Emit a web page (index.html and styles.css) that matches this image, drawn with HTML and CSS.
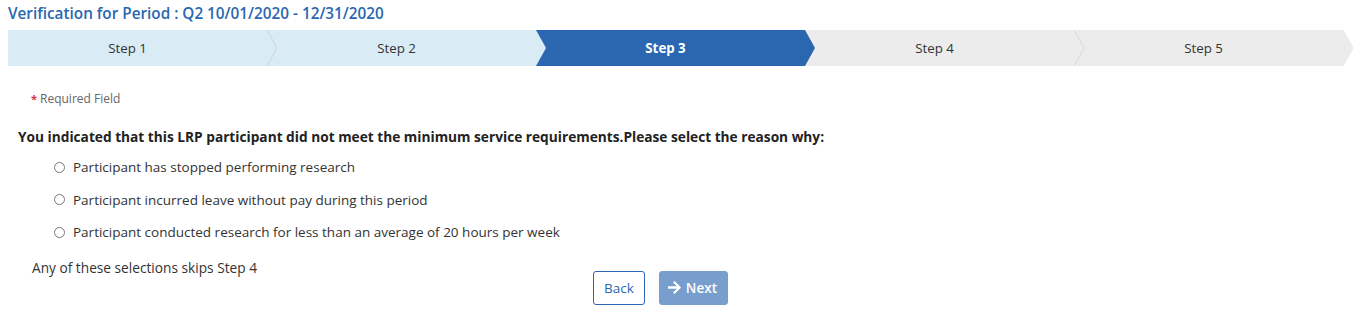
FILE: index.html
```html
<!DOCTYPE html>
<html>
<head>
<meta charset="utf-8">
<link rel="stylesheet" href="styles.css">
</head>
<body>
<div class="page">
  <h1 class="title">Verification for Period : Q2 10/01/2020 - 12/31/2020</h1>
  <div class="stepper">
    <div class="step done first">Step 1</div>
    <svg class="sep" viewBox="0 0 10 36" preserveAspectRatio="none"><rect width="10" height="36" fill="#d9ecf5"/><polygon points="0,0 10,18 0,36" fill="#d9ecf5"/><polyline points="0,0 10,18 0,36" fill="none" stroke="#c8ced2" stroke-width="0.8"/></svg>
    <div class="step done">Step 2</div>
    <svg class="sep" viewBox="0 0 10 36" preserveAspectRatio="none"><rect width="10" height="36" fill="#2a67b0"/><polygon points="0,0 10,18 0,36" fill="#d9ecf5"/></svg>
    <div class="step active">Step 3</div>
    <svg class="sep" viewBox="0 0 10 36" preserveAspectRatio="none"><rect width="10" height="36" fill="#ececec"/><polygon points="0,0 10,18 0,36" fill="#2a67b0"/></svg>
    <div class="step todo">Step 4</div>
    <svg class="sep" viewBox="0 0 10 36" preserveAspectRatio="none"><rect width="10" height="36" fill="#ececec"/><polygon points="0,0 10,18 0,36" fill="#ececec"/><polyline points="0,0 10,18 0,36" fill="none" stroke="#d2d2d2" stroke-width="0.8"/></svg>
    <div class="step todo">Step 5</div>
    <svg class="sep" viewBox="0 0 10 36" preserveAspectRatio="none"><polygon points="0,0 10,18 0,36" fill="#ececec"/><polyline points="0,0 10,18 0,36" fill="none" stroke="#e0e0e0" stroke-width="0.6"/></svg>
  </div>

  <div class="required"><span class="star">*</span>Required Field</div>

  <p class="question">You indicated that this LRP participant did not meet the minimum service requirements.Please select the reason why:</p>

  <div class="options">
    <label class="option"><input type="radio" name="reason" class="radio"><span>Participant has stopped performing research</span></label>
    <label class="option"><input type="radio" name="reason" class="radio"><span>Participant incurred leave without pay during this period</span></label>
    <label class="option"><input type="radio" name="reason" class="radio"><span>Participant conducted research for less than an average of 20 hours per week</span></label>
  </div>

  <p class="note">Any of these selections skips Step 4</p>

  <div class="actions">
    <button class="btn btn-back">Back</button>
    <button class="btn btn-next" disabled><svg class="arrow" viewBox="0 0 448 512"><path d="M190.5 66.9l22.2-22.2c9.4-9.4 24.6-9.4 33.9 0L441 239c9.4 9.4 9.4 24.6 0 33.9L246.6 467.3c-9.4 9.4-24.6 9.4-33.9 0l-22.2-22.2c-9.5-9.5-9.3-25 .4-34.3L311.4 296H24c-13.3 0-24-10.7-24-24v-32c0-13.3 10.7-24 24-24h287.4L190.9 101.2c-9.8-9.3-10-24.8-.4-34.3z" fill="#fff"/></svg>Next</button>
  </div>
</div>
</body>
</html>
```

FILE: styles.css
```css
* { box-sizing: border-box; }
body {
  margin: 0;
  background: #fff;
  font-family: "Open Sans", "Noto Sans", sans-serif;
  color: #333;
}
.page {
  padding: 0 8px;
}
.title {
  margin: 0;
  padding-top: 3px;
  font-size: 15.3px;
  line-height: 20px;
  font-weight: 600;
  color: #2a67b0;
}
.stepper {
  margin-top: 7px;
  height: 36px;
  display: flex;
}
.step {
  width: 260px;
  height: 36px;
  display: flex;
  align-items: center;
  justify-content: center;
  padding-right: 20px;
  font-size: 13.3px;
  color: #333;
}
.step.done { background: #d9ecf5; }
.step.active { background: #2a67b0; color: #fff; font-weight: 700; }
.step.todo { background: #ececec; }
.sep {
  width: 10px;
  height: 36px;
  display: block;
  flex: none;
}
.required {
  margin-top: 24px;
  padding-left: 23px;
  font-size: 12px;
  line-height: 18px;
  color: #666;
}
.star {
  color: #d9304a;
  font-weight: 700;
  margin-right: 3px;
  font-size: 11px;
}
.question {
  margin: 19px 0 0;
  padding-left: 10px;
  font-size: 13.7px;
  line-height: 20px;
  font-weight: 700;
  color: #222;
}
.options {
  margin-top: 4px;
  padding-left: 46px;
}
.option {
  display: flex;
  align-items: center;
  height: 32.5px;
  font-size: 13.5px;
  color: #333;
}
.radio {
  appearance: none;
  -webkit-appearance: none;
  margin: 0 8px 0 0;
  width: 11px;
  height: 11px;
  border: 1px solid #777;
  border-radius: 50%;
  background: #fff;
}
.note {
  margin: 9px 0 0;
  padding-left: 24px;
  font-size: 13.7px;
  line-height: 20px;
  color: #333;
}
.actions {
  margin-top: -7px;
  padding-left: 585px;
  display: flex;
  gap: 14px;
}
.btn {
  height: 34px;
  border-radius: 3px;
  font-family: "Open Sans", "Noto Sans", sans-serif;
  font-size: 13.5px;
  padding: 0 10px;
  display: flex;
  align-items: center;
}
.btn-back {
  width: 52px;
  justify-content: center;
  background: #fff;
  border: 1px solid #2a67b0;
  color: #2a67b0;
}
.btn-next {
  width: 69px;
  background: #789ece;
  border: 1px solid #789ece;
  color: #fff;
  font-weight: 600;
  padding-left: 8px;
}
.arrow {
  width: 13px;
  height: 15px;
  margin-right: 5px;
}
```
